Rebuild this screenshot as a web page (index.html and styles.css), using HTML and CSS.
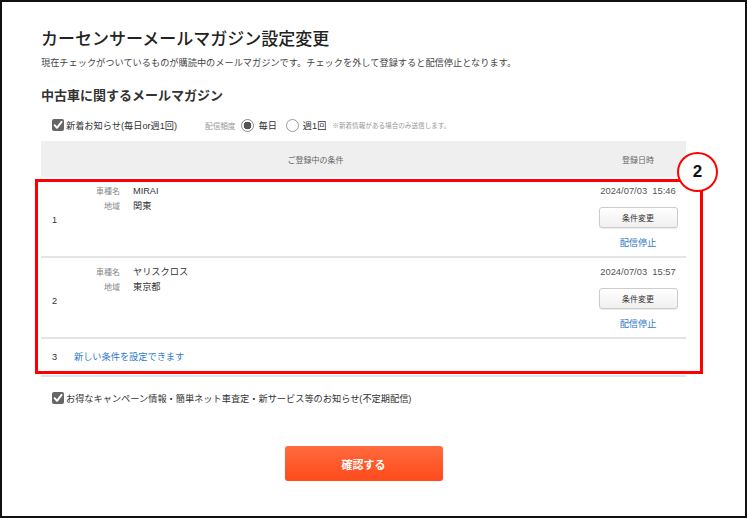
FILE: index.html
```html
<!DOCTYPE html>
<html lang="ja">
<head>
<meta charset="utf-8">
<title>カーセンサーメールマガジン設定変更</title>
<link rel="stylesheet" href="styles.css">
</head>
<body>
<div class="frame">
  <div class="content">
    <h1 class="title">カーセンサーメールマガジン設定変更</h1>
    <p class="lead">現在チェックがついているものが購読中のメールマガジンです。チェックを外して登録すると配信停止となります。</p>

    <h2 class="section">中古車に関するメールマガジン</h2>
    <div class="option-row">
      <label class="check">
        <span class="box"><svg width="12" height="12" viewBox="0 0 12 12"><path d="M2.6 6.2 L5 8.8 L9.6 2.8" fill="none" stroke="#fff" stroke-width="1.9" stroke-linecap="round" stroke-linejoin="round"/></svg></span>新着お知らせ(毎日or週1回)
      </label>
      <span class="freq">配信頻度</span>
      <label class="radio"><span class="ring on"></span>毎日</label>
      <label class="radio"><span class="ring"></span>週1回</label>
      <span class="note">※新着情報がある場合のみ送信します。</span>
    </div>

    <div class="cond-table">
      <div class="thead">
        <div class="th-cond">ご登録中の条件</div>
        <div class="th-date">登録日時</div>
      </div>

      <div class="trow">
        <div class="num">1</div>
        <dl class="cond">
          <dt>車種名</dt><dd>MIRAI</dd>
          <dt>地域</dt><dd>関東</dd>
        </dl>
        <div class="side">
          <div class="date">2024/07/03&nbsp;&nbsp;15:46</div>
          <button class="btn-change" type="button">条件変更</button>
          <a class="link" href="#">配信停止</a>
        </div>
      </div>

      <div class="trow">
        <div class="num">2</div>
        <dl class="cond">
          <dt>車種名</dt><dd>ヤリスクロス</dd>
          <dt>地域</dt><dd>東京都</dd>
        </dl>
        <div class="side">
          <div class="date">2024/07/03&nbsp;&nbsp;15:57</div>
          <button class="btn-change" type="button">条件変更</button>
          <a class="link" href="#">配信停止</a>
        </div>
      </div>

      <div class="trow trow-new">
        <div class="num">3</div>
        <a class="link" href="#">新しい条件を設定できます</a>
      </div>

      <!-- annotation overlay -->
      <div class="mark-box"></div>
      <div class="mark-num">2</div>
    </div>

    <div class="option-row option-bottom">
      <label class="check">
        <span class="box"><svg width="12" height="12" viewBox="0 0 12 12"><path d="M2.6 6.2 L5 8.8 L9.6 2.8" fill="none" stroke="#fff" stroke-width="1.9" stroke-linecap="round" stroke-linejoin="round"/></svg></span>お得なキャンペーン情報・簡単ネット車査定・新サービス等のお知らせ(不定期配信)
      </label>
    </div>

    <div class="actions">
      <button class="btn-confirm" type="button">確認する</button>
    </div>
  </div>
</div>
</body>
</html>
```

FILE: styles.css
```css
* {
	box-sizing: border-box;
}

body {
	margin: 0;
	background: #fff;
	color: #333;
	font-family: "Liberation Sans", "Noto Sans CJK JP", sans-serif;
}

.frame {
	width: 747px;
	height: 518px;
	border: 2px solid #111;
	padding-top: 26px;
}

.content {
	width: 645px;
	margin-left: 39px;
}

.title {
	margin: 0;
	font-size: 17px;
	line-height: 24px;
	font-weight: 500;
	color: #222;
}

.lead {
	margin: 4px 0 0;
	font-size: 9.2px;
	line-height: 14px;
	color: #444;
}

.section {
	margin: 17px 0 0;
	font-size: 13px;
	line-height: 18px;
	font-weight: bold;
	color: #333;
}

.option-row {
	display: flex;
	align-items: center;
	height: 16px;
	margin-top: 12px;
	padding-left: 11px;
	font-size: 9.2px;
	color: #333;
}

.check {
	display: flex;
	align-items: center;
}

.box {
	display: inline-flex;
	width: 12px;
	height: 12px;
	margin-right: 2px;
	border-radius: 2px;
	background: #666;
}

.freq {
	margin-left: 28px;
	font-size: 7.6px;
	color: #999;
}

.radio {
	display: flex;
	align-items: center;
	margin-left: 6px;
}

.radio + .radio {
	margin-left: 9px;
}

.ring {
	width: 13px;
	height: 13px;
	margin-right: 4px;
	border: 1px solid #999;
	border-radius: 50%;
	background: #fff;
}

.ring.on {
	border-color: #888;
	background: radial-gradient(circle, #555 0, #555 3.6px, #fff 4.1px);
}

.note {
	margin-left: 6px;
	font-size: 6.6px;
	color: #999;
}

.cond-table {
	position: relative;
	margin-top: 8px;
	border-bottom: 2px solid #e4e4e4;
}

.thead {
	display: flex;
	height: 36px;
	align-items: center;
	background: #efefef;
	font-size: 8px;
	color: #666;
}

.th-cond {
	flex: 1;
	text-align: center;
}

.th-date {
	width: 96px;
	text-align: center;
}

.trow {
	display: grid;
	grid-template-columns: 33px 1fr 96px;
	padding: 7px 0 6px;
	border-bottom: 2px solid #e4e4e4;
	font-size: 9.2px;
}

.num {
	align-self: center;
	padding-left: 11px;
	padding-top: 5px;
	line-height: 14px;
}

.cond {
	display: grid;
	grid-template-columns: 46px auto;
	column-gap: 13px;
	align-content: start;
	margin: 0;
	line-height: 15px;
}

.cond dt {
	text-align: right;
	font-size: 8px;
	color: #888;
}

.cond dd {
	margin: 0;
	color: #333;
}

.side {
	display: flex;
	flex-direction: column;
	align-items: center;
}

.date {
	line-height: 14px;
	font-size: 9.4px;
	color: #555;
}

.btn-change {
	width: 79px;
	height: 21px;
	margin-top: 9px;
	padding: 0;
	border: 1px solid #ccc;
	border-radius: 3px;
	background: linear-gradient(#fff, #f0f0f0);
	box-shadow: 0 1px 1px rgba(0, 0, 0, 0.08);
	font-family: inherit;
	font-size: 8px;
	color: #333;
}

.link {
	color: #2f7bc8;
	text-decoration: none;
	line-height: 14px;
}

.side .link {
	margin-top: 8px;
}

.trow-new {
	height: 36px;
	padding: 0;
	border-bottom: none;
	align-items: center;
	grid-template-columns: 33px 1fr;
}

.trow-new .num {
	padding-top: 0;
}

.mark-box {
	position: absolute;
	left: -6px;
	top: 38px;
	width: 668px;
	height: 195px;
	border: 3px solid #f00;
}

.mark-num {
	position: absolute;
	left: 636px;
	top: 11px;
	width: 41px;
	height: 40px;
	border: 2px solid #f00;
	border-radius: 50%;
	background: #fff;
	text-align: center;
	line-height: 36px;
	font-size: 17px;
	font-weight: bold;
	color: #111;
}

.option-bottom {
	margin-top: 13px;
}

.actions {
	display: flex;
	justify-content: center;
	margin-top: 40px;
}

.btn-confirm {
	width: 158px;
	height: 35px;
	border: none;
	border-radius: 3px;
	background: linear-gradient(#ff6b3e, #ff4a1c);
	font-family: inherit;
	font-size: 11px;
	font-weight: bold;
	color: #fff;
}
```
